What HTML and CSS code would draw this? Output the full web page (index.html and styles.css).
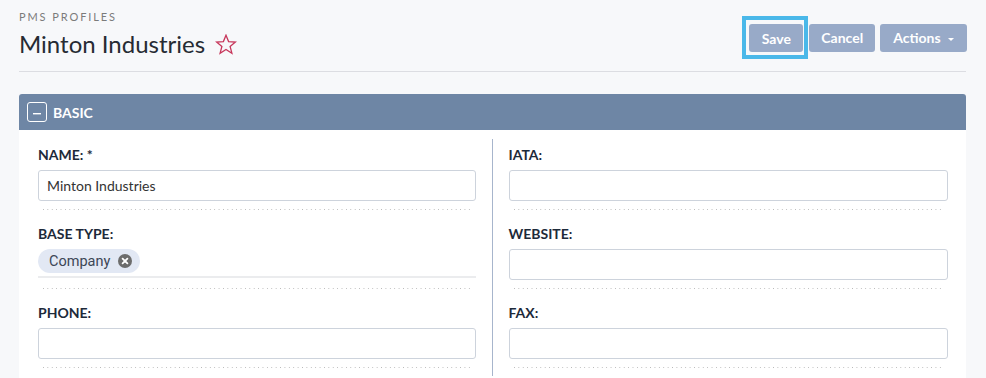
FILE: index.html
```html
<!DOCTYPE html>
<html lang="en">
<head>
    <meta charset="UTF-8">
    <title>PMS Profiles - Minton Industries</title>
    <link rel="stylesheet" href="styles.css">
</head>
<body>

<div class="page-header">
    <div class="title-block">
        <div class="breadcrumb">PMS PROFILES</div>
        <h1 class="page-title">Minton Industries
            <svg class="fav-star" width="22" height="21" viewBox="0 0 22 21">
                <path d="M11 1.2 L13.6 7.6 L20.4 8 L15.1 12.4 L16.9 19.2 L11 15.4 L5.1 19.2 L6.9 12.4 L1.6 8 L8.4 7.6 Z" fill="none" stroke="#c7375b" stroke-width="1.3" stroke-linejoin="miter"/>
            </svg>
        </h1>
    </div>
    <div class="header-buttons">
        <span class="focus-ring"><button class="btn btn-save">Save</button></span>
        <button class="btn">Cancel</button>
        <button class="btn btn-actions">Actions <span class="caret"></span></button>
    </div>
</div>

<div class="panel">
    <div class="panel-heading">
        <span class="collapse-box">
            <svg width="10" height="10" viewBox="0 0 10 10"><rect x="1" y="6" width="8" height="1.4" fill="#fff"/></svg>
        </span>
        BASIC
    </div>
    <div class="panel-body">
        <div class="col col-left">
            <div class="field">
                <label class="field-label">NAME: *</label>
                <input class="text-input" type="text" value="Minton Industries">
                <div class="dots"></div>
            </div>
            <div class="field">
                <label class="field-label">BASE TYPE:</label>
                <div class="chip-row">
                    <span class="chip">Company
                        <span class="chip-x">
                            <svg width="14" height="14" viewBox="0 0 14 14">
                                <circle cx="7" cy="7" r="7" fill="#6c6c6c"/>
                                <path d="M4.6 4.6 L9.4 9.4 M9.4 4.6 L4.6 9.4" stroke="#fff" stroke-width="1.8" stroke-linecap="round"/>
                            </svg>
                        </span>
                    </span>
                </div>
                <div class="dots dots-chip"></div>
            </div>
            <div class="field">
                <label class="field-label">PHONE:</label>
                <input class="text-input" type="text" value="">
                <div class="dots"></div>
            </div>
        </div>
        <div class="col col-right">
            <div class="field">
                <label class="field-label">IATA:</label>
                <input class="text-input" type="text" value="">
                <div class="dots"></div>
            </div>
            <div class="field">
                <label class="field-label">WEBSITE:</label>
                <input class="text-input" type="text" value="">
                <div class="dots"></div>
            </div>
            <div class="field">
                <label class="field-label">FAX:</label>
                <input class="text-input" type="text" value="">
                <div class="dots"></div>
            </div>
        </div>
    </div>
</div>

</body>
</html>
```

FILE: styles.css
```css
body {
    font-family: Lato, "Open Sans", sans-serif;
    background-color: #f7f8fa;
    margin: 0;
    padding: 10px 20px 0 19px;
    overflow: hidden;
}
.page-header {
    display: flex;
    justify-content: space-between;
    align-items: flex-start;
    border-bottom: 1px solid #dcdde2;
    padding-bottom: 11px;
}
.breadcrumb {
    font-size: 11px;
    line-height: 14px;
    letter-spacing: 1.9px;
    color: #7b7b7b;
}
.page-title {
    margin: 4px 0 0 0;
    font-size: 24px;
    line-height: 32px;
    font-weight: normal;
    color: #262b33;
    display: flex;
    align-items: center;
    gap: 10px;
}
.fav-star {
    margin-top: 1px;
}
.header-buttons {
    display: flex;
    align-items: center;
    gap: 5px;
    margin-top: 6px;
    margin-right: -1px;
}
/* square focus frame round the Save button */
.focus-ring {
    display: flex;
    border: 4px solid #4ab8e9;
    padding: 4px 1px 3px 3px;
    margin-right: -4px;
}
.btn {
    height: 28px;
    padding: 0 12px;
    border: none;
    border-radius: 3px;
    background-color: #98aac8;
    color: white;
    font-family: Lato, sans-serif;
    font-weight: bold;
    font-size: 14px;
    cursor: pointer;
}
.btn-save {
    padding: 0 12.5px;
}
.btn-actions {
    padding: 0 13px;
}
.caret {
    display: inline-block;
    width: 0;
    height: 0;
    margin-left: 4px;
    vertical-align: middle;
    border-left: 3px solid transparent;
    border-right: 3px solid transparent;
    border-top: 3px solid white;
}
.panel {
    margin-top: 22px;
    background: white;
    border-radius: 3px 3px 0 0;
}
.panel-heading {
    height: 36px;
    background-color: #6e86a5;
    border-radius: 3px 3px 0 0;
    display: flex;
    align-items: center;
    gap: 6px;
    padding-left: 8px;
    color: white;
    font-weight: bold;
    font-size: 14px;
}
.collapse-box {
    width: 18px;
    height: 18px;
    border: 1px solid #fff;
    border-radius: 3px;
    display: flex;
    align-items: center;
    justify-content: center;
}
.panel-body {
    display: grid;
    grid-template-columns: 1fr 1fr;
    padding-top: 9px;
    padding-bottom: 40px;
}
.col-left {
    padding: 0 16px 0 19px;
    border-right: 1px solid #a7b5cc;
}
.col-right {
    padding: 0 18px 0 16px;
}
.field {
    padding-top: 7px;
}
.field-label {
    display: block;
    font-size: 14px;
    line-height: 18px;
    font-weight: bold;
    color: #1d2a3a;
    margin-bottom: 6px;
}
.text-input {
    display: block;
    box-sizing: border-box;
    width: 100%;
    height: 31px;
    border: 1px solid #cdd3dc;
    border-radius: 3px;
    padding: 0 8px;
    font-family: Lato, sans-serif;
    font-size: 14px;
    color: #333;
    background: white;
}
.dots {
    height: 1px;
    margin: 8px 5px 8px 5px;
    background-image: linear-gradient(to right, #b9b9b9 1px, transparent 1px);
    background-size: 4.4px 1px;
    background-repeat: repeat-x;
}
.chip-row {
    box-sizing: border-box;
    height: 29px;
    border-bottom: 2px solid #ebecee;
}
.dots-chip {
    margin-top: 10px;
}
.chip {
    display: inline-flex;
    align-items: center;
    height: 24px;
    padding: 0 8px 0 11px;
    border-radius: 12px;
    background-color: #e2e8f4;
    font-family: Roboto, sans-serif;
    font-size: 14.5px;
    color: #3c4656;
    gap: 8px;
}
.chip-x {
    display: flex;
}
```
